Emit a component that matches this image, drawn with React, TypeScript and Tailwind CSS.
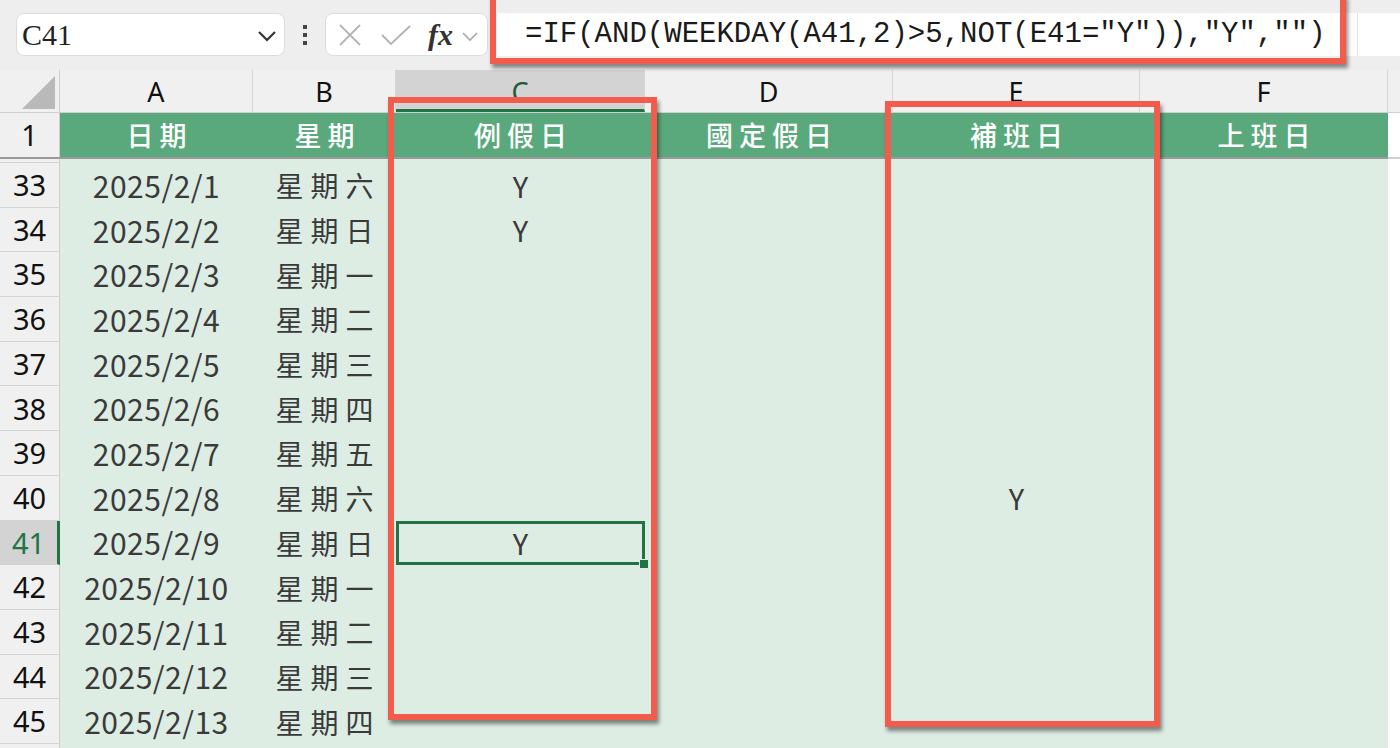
import React from 'react';

const cols = [
  { key: 'A', w: 'w-[193px]', title: '日期' },
  { key: 'B', w: 'w-[143px]', title: '星期' },
  { key: 'C', w: 'w-[249px]', title: '例假日' },
  { key: 'D', w: 'w-[248px]', title: '國定假日' },
  { key: 'E', w: 'w-[247px]', title: '補班日' },
  { key: 'F', w: 'w-[248px]', title: '上班日' },
];

const rows = [
  { n: 33, d: '2025/2/1', w: '星期六', c: 'Y', e: '' },
  { n: 34, d: '2025/2/2', w: '星期日', c: 'Y', e: '' },
  { n: 35, d: '2025/2/3', w: '星期一', c: '', e: '' },
  { n: 36, d: '2025/2/4', w: '星期二', c: '', e: '' },
  { n: 37, d: '2025/2/5', w: '星期三', c: '', e: '' },
  { n: 38, d: '2025/2/6', w: '星期四', c: '', e: '' },
  { n: 39, d: '2025/2/7', w: '星期五', c: '', e: '' },
  { n: 40, d: '2025/2/8', w: '星期六', c: '', e: 'Y' },
  { n: 41, d: '2025/2/9', w: '星期日', c: 'Y', e: '' },
  { n: 42, d: '2025/2/10', w: '星期一', c: '', e: '' },
  { n: 43, d: '2025/2/11', w: '星期二', c: '', e: '' },
  { n: 44, d: '2025/2/12', w: '星期三', c: '', e: '' },
  { n: 45, d: '2025/2/13', w: '星期四', c: '', e: '' },
];

const cjk = "font-['Noto_Sans_CJK_TC','Noto_Sans',sans-serif]";

export default function App() {
  return (
    <div className="relative w-[1400px] h-[748px] overflow-hidden bg-white select-none">
      {/* Top bar */}
      <div className="h-[70px] bg-[#eeeeee] flex items-start pt-[13px]">
        <div className="ml-[16px] w-[269px] h-[43px] bg-white rounded-[8px] border border-[#dcdcdc] flex items-center pl-[5px] pr-[6px]">
          <span className="font-['Liberation_Serif',serif] text-[30px] text-[#222] leading-none flex-1">C41</span>
          <svg width="22" height="14" viewBox="0 0 22 14" className="mt-[2px]">
            <polyline points="3,3 11,11 19,3" fill="none" stroke="#333" strokeWidth="2.2" />
          </svg>
        </div>
        <div className="w-[40px] h-[43px] flex flex-col items-center justify-center gap-[4px]">
          <div className="w-[4px] h-[4px] bg-[#444]" />
          <div className="w-[4px] h-[4px] bg-[#444]" />
          <div className="w-[4px] h-[4px] bg-[#444]" />
        </div>
        <div className="w-[163px] h-[43px] bg-white rounded-[8px] border border-[#dcdcdc] flex items-center pl-[12px]">
          <svg width="24" height="24" viewBox="0 0 24 24">
            <line x1="2" y1="2" x2="22" y2="22" stroke="#b3b3b3" strokeWidth="1.8" />
            <line x1="22" y1="2" x2="2" y2="22" stroke="#b3b3b3" strokeWidth="1.8" />
          </svg>
          <svg width="32" height="22" viewBox="0 0 32 22" className="ml-[18px]">
            <polyline points="2,11 11,20 30,2" fill="none" stroke="#b3b3b3" strokeWidth="1.8" />
          </svg>
          <span className="ml-[16px] font-['Liberation_Serif',serif] italic font-semibold text-[30px] text-[#333] leading-none">fx</span>
          <svg width="18" height="12" viewBox="0 0 18 12" className="ml-[8px] mt-[2px]">
            <polyline points="2,3 9,10 16,3" fill="none" stroke="#a8a8a8" strokeWidth="1.6" />
          </svg>
        </div>
        <div className="ml-[9px] flex-1 h-[43px] bg-white flex items-center pl-[28px] relative">
          <span className="font-['Liberation_Mono',monospace] text-[29px] text-[#1a1a1a] leading-none whitespace-pre">
            =IF(AND(WEEKDAY(A41,2)&gt;5,NOT(E41="Y")),"Y","")
          </span>
          <div className="absolute right-[42px] top-0 h-[43px] w-px bg-[#e4e4e4]" />
        </div>
      </div>

      {/* Column headers */}
      <div className="h-[43px] flex bg-[#f0f0f0] border-b border-[#cfcfcf]">
        <div className="w-[60px] h-full border-r border-[#cfcfcf] relative">
          <svg width="36" height="36" viewBox="0 0 36 36" className="absolute left-[21px] top-[5px]">
            <polygon points="1,34 34,34 34,1" fill="#b9b9b9" />
          </svg>
        </div>
        {cols.map((c) => {
          const sel = c.key === 'C';
          return (
            <div
              key={c.key}
              className={`${c.w} h-full flex items-center justify-center border-r border-[#d6d6d6] font-['Noto_Sans',sans-serif] text-[27px] leading-none ${
                sel ? 'bg-[#d3d3d3] text-[#1d5c38] border-b-[3px] border-b-[#217346]' : 'text-[#111]'
              }`}
            >
              <span className={sel ? 'mt-[3px]' : ''}>{c.key}</span>
            </div>
          );
        })}
        <div className="flex-1 h-full" />
      </div>

      {/* Row 1 header */}
      <div className="h-[44px] flex">
        <div className="w-[60px] h-full bg-[#f0f0f0] border-r border-[#cfcfcf] flex items-center justify-center font-['Noto_Sans',sans-serif] text-[29px] text-[#111]">
          1
        </div>
        {cols.map((c) => (
          <div
            key={c.key}
            className={`${c.w} h-full bg-[#5aa97c] flex items-center justify-center ${cjk} font-medium text-[27px] text-white tracking-[6px] pl-[6px]`}
          >
            {c.title}
          </div>
        ))}
        <div className="flex-1 h-full bg-white" />
      </div>

      {/* Frozen pane divider */}
      <div className="h-[2px] flex">
        <div className="w-[1388px] bg-[#9a9a9a]" />
        <div className="flex-1 bg-[#d0d0d0]" />
      </div>
      <div className="h-[4px] flex">
        <div className="w-[60px] bg-[#f0f0f0] border-r border-[#cfcfcf] border-b border-b-[#d4d4d4]" />
        <div className="w-[1328px] bg-[#ddede4]" />
        <div className="flex-1 bg-white" />
      </div>

      {/* Data rows */}
      {rows.map((r) => {
        const selRow = r.n === 41;
        return (
          <div key={r.n} className="h-[44.7px] flex">
            <div
              className={`w-[60px] h-full flex items-center justify-center font-['Noto_Sans',sans-serif] text-[29px] border-b border-[#d4d4d4] ${
                selRow
                  ? 'bg-[#d3d3d3] text-[#217346] border-r-[3px] border-r-[#217346]'
                  : 'bg-[#f0f0f0] text-[#111] border-r border-r-[#cfcfcf]'
              }`}
            >
              {r.n}
            </div>
            <div className={`w-[193px] h-full bg-[#ddede4] flex items-center justify-center ${cjk} text-[30px] tracking-[0.5px] text-[#3a3a3a]`}>
              {r.d}
            </div>
            <div className={`w-[143px] h-full bg-[#ddede4] flex items-center justify-center ${cjk} text-[28px] text-[#3a3a3a] tracking-[7px] pl-[7px]`}>
              {r.w}
            </div>
            <div className={`w-[249px] h-full bg-[#ddede4] flex items-center justify-center ${cjk} text-[29px] text-[#3a3a3a] relative`}>
              {r.c}
              {selRow && (
                <div className="absolute inset-0 z-10 border-[3px] border-[#217346]">
                  <div className="absolute right-[-7px] bottom-[-7px] w-[10px] h-[10px] bg-[#217346] border-[1.5px] border-[#ddede4]" />
                </div>
              )}
            </div>
            <div className="w-[248px] h-full bg-[#ddede4]" />
            <div className={`w-[247px] h-full bg-[#ddede4] flex items-center justify-center ${cjk} text-[29px] text-[#3a3a3a]`}>
              {r.e}
            </div>
            <div className="w-[248px] h-full bg-[#ddede4]" />
            <div className="flex-1 h-full bg-white" />
          </div>
        );
      })}
      <div className="h-[20px] flex">
        <div className="w-[60px] h-full bg-[#f0f0f0] border-r border-[#cfcfcf]" />
        <div className="w-[1328px] h-full bg-[#ddede4]" />
        <div className="flex-1 h-full bg-white" />
      </div>

      {/* Red annotation boxes */}
      <div className="absolute z-20 left-[490px] top-[-6px] w-[856px] h-[70px] border-[6px] border-[#f25c4c] shadow-[2px_4px_4px_rgba(0,0,0,0.45)] pointer-events-none" />
      <div className="absolute z-20 left-[388px] top-[97px] w-[269px] h-[623px] border-[6px] border-[#f25c4c] shadow-[2px_4px_4px_rgba(0,0,0,0.45)] pointer-events-none" />
      <div className="absolute z-20 left-[885px] top-[101px] w-[275px] h-[626px] border-[6px] border-[#f25c4c] shadow-[2px_4px_4px_rgba(0,0,0,0.45)] pointer-events-none" />
    </div>
  );
}
